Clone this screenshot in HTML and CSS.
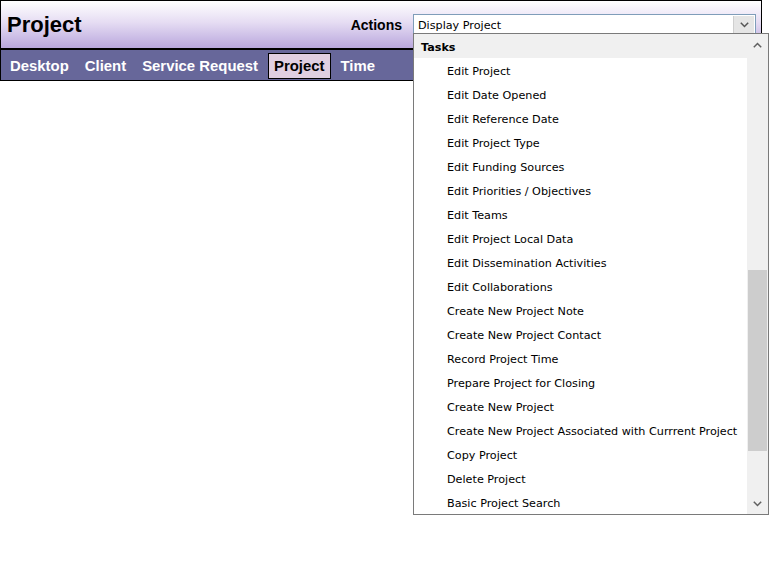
FILE: index.html
```html
<!DOCTYPE html>
<html>
<head>
<meta charset="utf-8">
<link rel="stylesheet" href="styles.css">
</head>
<body>
<div class="page">
<div class="app">
  <header class="head">
    <h1 class="title">Project</h1>
    <div class="actions">
      <span class="actions-label">Actions</span>
      <div class="select-wrap">
        <div class="select">
          <span class="select-value">Display Project</span>
          <span class="select-btn">
            <svg width="9" height="6" viewBox="0 0 9 6"><path d="M0.8 0.8 L4.5 4.5 L8.2 0.8" fill="none" stroke="#555" stroke-width="1.5"/></svg>
          </span>
        </div>
        <div class="dropdown">
          <ul class="options">
            <li class="group">Tasks</li>
            <li>Edit Project</li>
            <li>Edit Date Opened</li>
            <li>Edit Reference Date</li>
            <li>Edit Project Type</li>
            <li>Edit Funding Sources</li>
            <li>Edit Priorities / Objectives</li>
            <li>Edit Teams</li>
            <li>Edit Project Local Data</li>
            <li>Edit Dissemination Activities</li>
            <li>Edit Collaborations</li>
            <li>Create New Project Note</li>
            <li>Create New Project Contact</li>
            <li>Record Project Time</li>
            <li>Prepare Project for Closing</li>
            <li>Create New Project</li>
            <li>Create New Project Associated with Currrent Project</li>
            <li>Copy Project</li>
            <li>Delete Project</li>
            <li>Basic Project Search</li>
          </ul>
          <div class="scrollbar">
            <span class="arrow up"><svg width="9" height="6" viewBox="0 0 9 6"><path d="M0.8 5.2 L4.5 1.5 L8.2 5.2" fill="none" stroke="#606060" stroke-width="1.5"/></svg></span>
            <div class="track"><div class="thumb"></div></div>
            <span class="arrow down"><svg width="9" height="6" viewBox="0 0 9 6"><path d="M0.8 0.8 L4.5 4.5 L8.2 0.8" fill="none" stroke="#606060" stroke-width="1.5"/></svg></span>
          </div>
        </div>
      </div>
    </div>
  </header>
  <nav class="nav">
    <a class="nav-item">Desktop</a>
    <a class="nav-item">Client</a>
    <a class="nav-item">Service Request</a>
    <a class="nav-item active">Project</a>
    <a class="nav-item">Time</a>
  </nav>
</div>
</div>
</body>
</html>
```

FILE: styles.css
```css
html, body {
  margin: 0;
  padding: 0;
  background: #ffffff;
}

body {
  font-family: "Liberation Sans", Arial, sans-serif;
}

.page {
  min-height: 573px;
}

.app {
  width: 760px;
  border: 1px solid #000;
  border-bottom: none;
}

.head {
  height: 47px;
  display: flex;
  align-items: center;
  justify-content: space-between;
  padding: 0 5px 0 6px;
  background: linear-gradient(to bottom, #ffffff 0%, #e6ddf3 45%, #b9a7dd 100%);
  border-bottom: 2px solid #000;
}

.title {
  margin: 0;
  font-size: 22px;
  font-weight: bold;
  color: #000;
}

.actions {
  display: flex;
  align-items: center;
  gap: 11px;
}

.actions-label {
  font-size: 14px;
  font-weight: bold;
  color: #000;
}

.select-wrap {
  position: relative;
}

.select {
  width: 341px;
  height: 19px;
  border: 1px solid #7f9db9;
  background: #fff;
  display: flex;
  align-items: center;
  justify-content: space-between;
  font-family: "DejaVu Sans", Verdana, sans-serif;
  font-size: 11.2px;
  color: #000;
}

.select-value {
  padding-left: 4px;
  padding-top: 1px;
}

.select-btn {
  width: 20px;
  height: 18px;
  margin-right: 1px;
  background: #e5e5e5;
  border-left: 1px solid #cfcfcf;
  display: flex;
  align-items: center;
  justify-content: center;
}

.dropdown {
  position: absolute;
  left: 0;
  top: 19px;
  width: 354px;
  height: 480px;
  border: 1px solid #7a7a7a;
  background: #fff;
  display: flex;
  z-index: 10;
}

.options {
  list-style: none;
  margin: 0;
  padding: 0;
  width: 333px;
  font-family: "DejaVu Sans", Verdana, sans-serif;
  font-size: 11.2px;
  color: #000;
}

.options li {
  height: 22px;
  padding-top: 2px;
  line-height: 24px;
  padding-left: 33px;
  white-space: nowrap;
}

.options li.group {
  padding-left: 7px;
  font-weight: bold;
  background: #f0f0f0;
}

.scrollbar {
  width: 21px;
  background: #f0f0f0;
  display: flex;
  flex-direction: column;
  align-items: stretch;
}

.arrow {
  height: 21px;
  display: flex;
  align-items: center;
  justify-content: center;
}

.track {
  flex: 1;
  padding-top: 215px;
}

.thumb {
  margin-left: 1px;
  width: 19px;
  height: 181px;
  background: #cdcdcd;
}

.nav {
  height: 30px;
  display: flex;
  align-items: center;
  gap: 4px;
  padding-left: 3px;
  background: #67679a;
  border-bottom: 1px solid #000;
}

.nav-item {
  font-size: 14.9px;
  font-weight: bold;
  color: #ffffff;
  padding: 4px 5px;
  border: 1px solid transparent;
  line-height: 16px;
  position: relative;
  top: 1px;
}

.nav-item.active {
  color: #000;
  background: #e0cfe1;
  border-color: #000;
}
```
